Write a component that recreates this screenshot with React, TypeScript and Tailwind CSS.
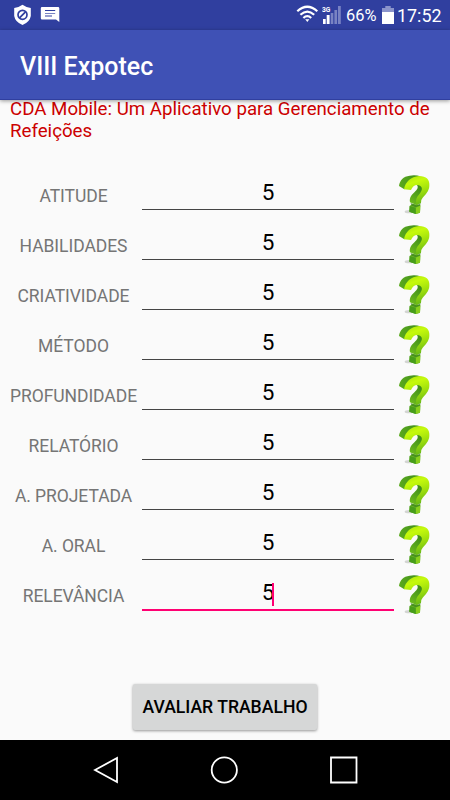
import React from "react";

const criteria = [
  "ATITUDE",
  "HABILIDADES",
  "CRIATIVIDADE",
  "MÉTODO",
  "PROFUNDIDADE",
  "RELATÓRIO",
  "A. PROJETADA",
  "A. ORAL",
  "RELEVÂNCIA",
];

function HelpIcon() {
  return (
    <svg className="ml-1 mt-1 h-[41px] w-[33px] shrink-0" viewBox="9 12 99 123">
      <defs>
        <linearGradient id="face" x1="0" y1="0" x2="0.3" y2="1">
          <stop offset="0" stopColor="#a6e00a" />
          <stop offset="0.3" stopColor="#c6fa0c" />
          <stop offset="0.65" stopColor="#9fe00c" />
          <stop offset="1" stopColor="#6fbd14" />
        </linearGradient>
        <linearGradient id="side" x1="0" y1="0" x2="1" y2="0">
          <stop offset="0" stopColor="#5cab1e" />
          <stop offset="1" stopColor="#3a8a1a" />
        </linearGradient>
        <linearGradient id="stem" x1="0" y1="1" x2="0.5" y2="0">
          <stop offset="0" stopColor="#74c01c" />
          <stop offset="1" stopColor="#3a8a1a" />
        </linearGradient>
      </defs>
      <ellipse cx="43" cy="125" rx="14" ry="5" fill="#b9bdb7" opacity="0.6" />
      <path d="M12 48C14 31 25 19 44 17Q60 13 76 19L60 30L28 58Z" fill="url(#side)" />
      <path d="M45 97C42 82 51 73 59 66C67 59 71 52 66 46L79 40L90 50L82 72L68 94L66 106Z" fill="url(#stem)" />
      <path d="M27 58C31 35 48 20 72 18C94 18 105 29 103 48C102 64 92 73 83 83Q77 89 78 99L65 106C60 89 66 80 74 71C82 61 83 53 76 48C66 41 53 46 48 60Z" fill="url(#face)" />
      <path d="M44 108L54 103L76 106L75 128L62 132L43 125Z" fill="#55a91a" />
      <path d="M44 108L54 103L76 106L62 113Z" fill="#7cc02a" />
      <path d="M62 113L76 106L75 128L62 132Z" fill="#88ce1c" />
      <path d="M44 108L62 113V132L43 125Z" fill="#479d1a" />
      <path d="M47 99L65 106L77 100L75 107L62 112L49 107Z" fill="#35821a" opacity="0.75" />
    </svg>
  );
}

function StatusBar() {
  return (
    <div className="flex h-[30px] items-start bg-[#303f9f] text-white">
      <svg className="ml-[13px] mt-[4px] h-[22px] w-[19px]" viewBox="0 0 19 22" fill="none">
        <path d="M9.5 .8Q14 4 17.8 4V12Q16.8 18 9.5 21Q2.2 18 1.2 12V4Q5 4 9.5 .8Z" fill="white" />
        <circle cx="9.5" cy="10.8" r="4.5" stroke="#303f9f" strokeWidth="1.7" />
        <path d="M6.5 13.8L12.5 7.8" stroke="#303f9f" strokeWidth="1.7" />
      </svg>
      <svg className="ml-2 mt-[6px] h-[17px] w-5" viewBox="0 0 20 17" fill="none">
        <path d="M2 1H18Q19.3 1 19.3 2.3V16L16 13.5H2Q.8 13.5 .8 12.3V2.3Q.8 1 2 1Z" fill="white" />
        <path d="M5 4.5H15.2M5 10H12" stroke="#303f9f" />
        <path d="M5 7.5H15.2" stroke="#7983c3" />
      </svg>
      <svg className="ml-[236px] mt-[5px] h-[18px] w-[23px]" viewBox="0 0 23 18" fill="none" stroke="white" strokeWidth="2.2">
        <path d="M1.3 6.3Q11.3-2.8 21.3 6.3M4.4 9.8Q11.3 3.4 18.2 9.8M7.4 13Q11.3 9.4 15.2 13" />
        <path d="M9.2 14.3H13.4L11.3 17Z" fill="white" stroke="none" />
      </svg>
      <svg className="ml-[3px] mt-[5px] h-5 w-[20px]" viewBox="0 0 20 20">
        <text x="0" y="7.3" fill="white" fontFamily="Roboto" fontWeight="700" fontSize="6.7">3G</text>
        <path d="M1 14H3.7V19H1ZM4.7 10H7.6V19H4.7Z" fill="white" />
        <path d="M8.7 8H11.3V19H8.7ZM12.4 5H15.1V19H12.4ZM16 1H18.8V19H16Z" fill="#7983c3" />
      </svg>
      <span className="ml-[4px] mt-[5px] w-[33px] whitespace-nowrap text-[16.4px] leading-[22px]">66%</span>
      <svg className="ml-[3px] mt-[5px] h-5 w-3" viewBox="0 0 12 20">
        <path d="M3.3 1H8.7V3H12V7H0V3H3.3Z" fill="#8b94cb" />
        <path d="M0 7H12V19H0Z" fill="white" />
      </svg>
      <span className="ml-[3px] mt-[5px] whitespace-nowrap text-[17.9px] leading-[22px]">17:52</span>
    </div>
  );
}

export default function App() {
  return (
    <main className="flex h-[800px] w-[450px] flex-col overflow-hidden bg-[#fafafa] font-['Roboto',sans-serif]">
      <StatusBar />
      <header className="relative z-10 flex h-[70px] shrink-0 items-center border-b border-[#303f9f] bg-[#3f51b5] px-5 pt-[5px] text-[25px] font-medium text-white shadow-[0_1px_4px_rgba(0,0,0,0.4)]">
        VIII Expotec
      </header>
      <h1 className="-mt-[2px] h-[70px] shrink-0 whitespace-nowrap pl-[10px] text-[18.7px] leading-[22px] text-[#cc0000]">
        CDA Mobile: Um Aplicativo para Gerenciamento de<br />Refeições
      </h1>
      <section className="mt-[2px] h-[514px] shrink-0">
        {criteria.map((name, i) => {
          const active = i === criteria.length - 1;
          return (
            <div key={name} className="flex h-[50px] pl-[10px]">
              <div className="mt-[15px] flex w-[127px] justify-center whitespace-nowrap text-[17.5px] leading-[22px] tracking-[-0.06px] text-[#757575]">{name}</div>
              <div className={active ? "ml-[5px] h-[41px] w-[252px] border-b-2 border-[#ff0072] text-center" : "ml-[5px] h-10 w-[252px] border-b border-[#444] text-center"}>
                <span className="relative mt-[9px] inline-block text-[22.5px] leading-[27px] text-black">
                  5{active && <i className="absolute right-0 top-[4px] h-[23px] w-[2px] bg-[#ff0072]" />}
                </span>
              </div>
              <HelpIcon />
            </div>
          );
        })}
      </section>
      <div className="flex h-14 shrink-0 justify-center">
        <button className="h-[46px] w-[184px] whitespace-nowrap rounded-[2px] bg-[#d6d7d7] text-[17.6px] font-medium text-black shadow-[0_1px_3px_rgba(0,0,0,0.4)]">AVALIAR TRABALHO</button>
      </div>
      <nav className="h-[60px] shrink-0 bg-black">
        <svg className="h-[60px] w-[450px]" viewBox="0 0 450 60" fill="none" stroke="white" strokeWidth="1.8">
          <path d="M95 30L117 18V42Z" />
          <circle cx="224.3" cy="30" r="12.6" />
          <path d="M331 17.5H356.5V42.5H331Z" />
        </svg>
      </nav>
    </main>
  );
}
